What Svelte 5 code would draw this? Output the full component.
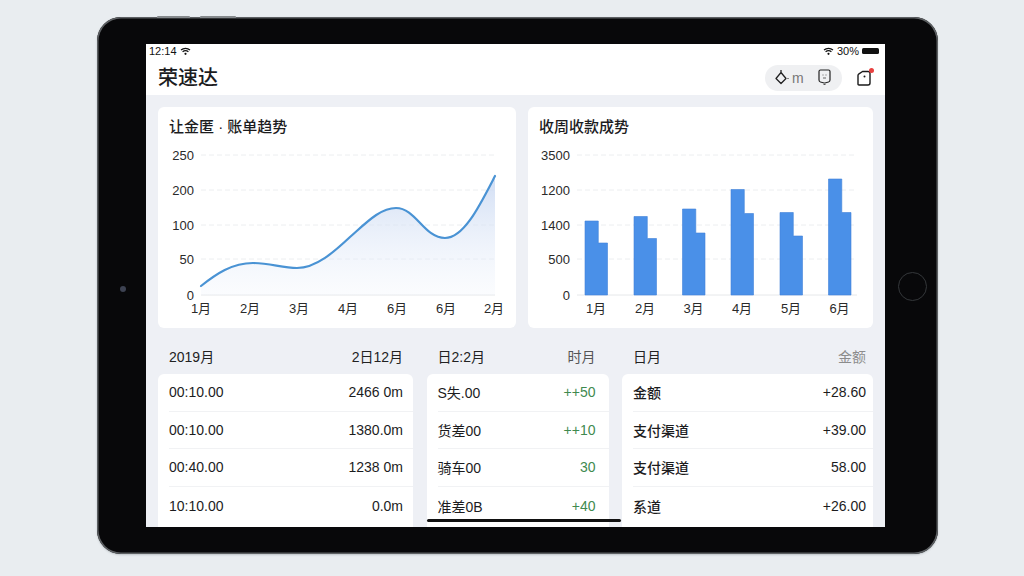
<script>
	const line_y = [
		{ label: '250', y: 48 },
		{ label: '200', y: 83 },
		{ label: '100', y: 118 },
		{ label: '50', y: 152 },
		{ label: '0', y: 188 }
	];
	const line_x = [
		{ label: '1月', x: 43 },
		{ label: '2月', x: 92 },
		{ label: '3月', x: 141 },
		{ label: '4月', x: 190 },
		{ label: '6月', x: 239 },
		{ label: '6月', x: 288 },
		{ label: '2月', x: 336 }
	];
	const curve =
		'M43 179 C58 167 74 156 95 156 C112 156 124 161 139 161 C158 161 176 145 192 130 C208 116 222 101 238 101 C258 101 266 131 287 131 C306 131 322 98 337 69';

	const bar_y = [
		{ label: '3500', y: 48 },
		{ label: '1200', y: 83 },
		{ label: '1400', y: 118 },
		{ label: '500', y: 152 },
		{ label: '0', y: 188 }
	];
	const bars = [
		{ label: '1月', x: 57, tall: 114, short: 136 },
		{ label: '2月', x: 106, tall: 109.5, short: 131.5 },
		{ label: '3月', x: 154.5, tall: 102, short: 126 },
		{ label: '4月', x: 203, tall: 82.5, short: 106.5 },
		{ label: '5月', x: 252, tall: 105.5, short: 129 },
		{ label: '6月', x: 300.5, tall: 72, short: 105.5 }
	];

	const lists = [
		{
			kind: 'plain',
			head: ['2019月', '2日12月'],
			rows: [
				['00:10.00', '2466 0m'],
				['00:10.00', '1380.0m'],
				['00:40.00', '1238 0m'],
				['10:10.00', '0.0m']
			]
		},
		{
			kind: 'delta',
			head: ['日2:2月', '时月'],
			rows: [
				['S失.00', '++50'],
				['货差00', '++10'],
				['骑车00', '30'],
				['准差0B', '+40']
			]
		},
		{
			kind: 'money',
			head: ['日月', '金额'],
			rows: [
				['金额', '+28.60'],
				['支付渠道', '+39.00'],
				['支付渠道', '58.00'],
				['系道', '+26.00']
			]
		}
	];
</script>

<div class="page">
	<div class="device">
		<span class="side-btn one"></span>
		<span class="side-btn two"></span>
		<span class="camera"></span>
		<span class="home-btn"></span>

		<div class="screen">
			<header class="top">
				<div class="status">
					<div class="status-side">
						<span>12:14</span>
						<svg width="11" height="8" viewBox="0 0 11 8">
							<path d="M1 3 C3.5 .7 7.5 .7 10 3 M2.6 4.8 C4.3 3.3 6.7 3.3 8.4 4.8" fill="none" stroke="#111" stroke-width="1.2" />
							<circle cx="5.5" cy="6.8" r="1.1" fill="#111" />
						</svg>
					</div>
					<div class="status-side">
						<svg width="11" height="8" viewBox="0 0 11 8">
							<path d="M1 3 C3.5 .7 7.5 .7 10 3 M2.6 4.8 C4.3 3.3 6.7 3.3 8.4 4.8" fill="none" stroke="#111" stroke-width="1.2" />
							<circle cx="5.5" cy="6.8" r="1.1" fill="#111" />
						</svg>
						<span>30%</span>
						<span class="battery"></span>
					</div>
				</div>
				<div class="nav">
					<h1>荣速达</h1>
					<div class="nav-tools">
						<div class="pill">
							<svg width="16" height="18" viewBox="0 0 16 18">
								<path d="M6 1 V3.5 M6 3.5 L11 9.5 L6 14.5 L1 9.5 Z" fill="none" stroke="#222" stroke-width="1.3" stroke-linejoin="round" />
								<path d="M11 9.5 H14" stroke="#888" stroke-width="1" />
							</svg>
							<span class="pill-text">m</span>
							<svg class="tag" width="13" height="17" viewBox="0 0 13 17">
								<path d="M2.5 1 H10.5 Q12 1 12 2.5 V11 Q12 12.5 10.5 13 L7 14 H6 L2.5 13 Q1 12.5 1 11 V2.5 Q1 1 2.5 1 Z" fill="none" stroke="#222" stroke-width="1.2" />
								<path d="M4.5 6 H5.5 M7.5 6 H8.5 M5 9 H8" stroke="#666" stroke-width="1" />
								<path d="M5.5 15.5 H7.5" stroke="#555" stroke-width="1" />
							</svg>
						</div>
						<div class="bell">
							<svg width="15" height="16" viewBox="0 0 15 16">
								<path d="M1 14 V5.5 Q1 4.5 2 3.8 L5.5 1.5 H11 Q13 1.5 13 3.5 V13 Q13 15 11 15 H2 Q1 15 1 14 Z" fill="none" stroke="#1a1a1a" stroke-width="1.4" stroke-linejoin="round" />
								<circle cx="7.5" cy="6.5" r="1" fill="#1a1a1a" />
							</svg>
							<span class="dot"></span>
						</div>
					</div>
				</div>
			</header>

			<main class="content">
				<section class="charts">
					<div class="card chart-card">
						<h2>让金匿 · 账单趋势</h2>
						<svg class="chart" viewBox="0 0 358 184" width="358" height="184">
							<defs>
								<linearGradient id="area" x1="0" y1="0" x2="0" y2="1">
									<stop offset="0" stop-color="#c9d8f2" stop-opacity="0.85" />
									<stop offset="1" stop-color="#eef3fb" stop-opacity="0.25" />
								</linearGradient>
							</defs>
							<g transform="translate(0,-37)">
								{#each line_y as t, i}
									<text class="tick" x="36" y={t.y + 5} text-anchor="end">{t.label}</text>
									<line
										class={i === 4 ? 'base' : 'grid'}
										x1="43"
										x2="337"
										y1={t.y}
										y2={t.y}
									/>
								{/each}
								<path d="{curve} V188 H43 Z" fill="url(#area)" />
								<path d={curve} fill="none" stroke="#4a93d4" stroke-width="2.2" stroke-linecap="round" />
								{#each line_x as t}
									<text class="tick" x={t.x} y="206" text-anchor="middle">{t.label}</text>
								{/each}
							</g>
						</svg>
					</div>

					<div class="card chart-card">
						<h2>收周收款成势</h2>
						<svg class="chart" viewBox="0 0 345 184" width="345" height="184">
							<g transform="translate(0,-37)">
								{#each bar_y as t, i}
									<text class="tick" x="42" y={t.y + 5} text-anchor="end">{t.label}</text>
									<line
										class={i === 4 ? 'base' : 'grid'}
										x1="49"
										x2="329"
										y1={t.y}
										y2={t.y}
									/>
								{/each}
								{#each bars as b}
									<path
										d="M{b.x} 188 V{b.tall} H{b.x + 13.3} V{b.short} H{b.x + 22.5} V188 Z"
										fill="#4a90e8"
										stroke="#3f82d8"
										stroke-width="0.6"
									/>
									<text class="tick" x={b.x + 11} y="206" text-anchor="middle">{b.label}</text>
								{/each}
							</g>
						</svg>
					</div>
				</section>

				<section class="lists">
					{#each lists as list}
						<div class="list {list.kind}">
							<div class="list-head">
								<span>{list.head[0]}</span>
								<span class="head-end">{list.head[1]}</span>
							</div>
							<div class="card rows">
								{#each list.rows as row}
									<div class="row">
										<span class="row-name">{row[0]}</span>
										<span class="row-value">{row[1]}</span>
									</div>
								{/each}
							</div>
						</div>
					{/each}
				</section>
			</main>

			<span class="home-bar"></span>
		</div>
	</div>
</div>

<style>
	:global(body) {
		margin: 0;
		background: #e9edf0;
	}
	.page {
		width: 1024px;
		height: 576px;
		padding: 17px 86px 22px 97px;
		box-sizing: border-box;
		overflow: hidden;
		font-family: 'Liberation Sans', 'Noto Sans CJK SC', sans-serif;
		color: #1c1c1e;
	}
	.device {
		position: relative;
		width: 841px;
		height: 537px;
		padding: 27px 53px 27px 49px;
		box-sizing: border-box;
		background: #08080a;
		border-radius: 24px;
		box-shadow:
			inset 0 0 0 1.5px #5d6063,
			0 1px 2px rgba(60, 70, 80, 0.25);
	}
	.side-btn {
		position: absolute;
		top: -1px;
		height: 2px;
		background: #85898c;
		border-radius: 1px 1px 0 0;
	}
	.side-btn.one {
		left: 60px;
		width: 33px;
	}
	.side-btn.two {
		left: 103px;
		width: 36px;
	}
	.camera {
		position: absolute;
		left: 23px;
		top: 269px;
		width: 6px;
		height: 6px;
		border-radius: 50%;
		background: #3d4252;
	}
	.home-btn {
		position: absolute;
		left: 801px;
		top: 255px;
		width: 27px;
		height: 27px;
		border: 1.5px solid #34373a;
		border-radius: 50%;
	}
	.screen {
		position: relative;
		width: 739px;
		height: 483px;
		overflow: hidden;
		background: #eef0f5;
	}
	.top {
		height: 51px;
		background: #fff;
		box-sizing: border-box;
	}
	.status {
		display: flex;
		justify-content: space-between;
		align-items: center;
		height: 13px;
		padding: 0 6px 0 3px;
		font-size: 11px;
		color: #111;
	}
	.status-side {
		display: flex;
		align-items: center;
		gap: 3px;
	}
	.battery {
		width: 17px;
		height: 6px;
		background: #111;
		border-radius: 1.5px;
	}
	.nav {
		display: flex;
		justify-content: space-between;
		align-items: center;
		height: 38px;
		padding: 3px 13px 0 12px;
		box-sizing: border-box;
	}
	h1 {
		margin: 0;
		font-size: 20px;
		font-weight: 500;
		line-height: 26px;
	}
	.nav-tools {
		display: flex;
		align-items: center;
		gap: 15px;
	}
	.pill {
		display: flex;
		align-items: center;
		width: 77px;
		height: 26px;
		padding-left: 10px;
		box-sizing: border-box;
		background: #eff0f2;
		border-radius: 13px;
	}
	.pill-text {
		margin-left: 1px;
		font-size: 14px;
		color: #777;
	}
	.tag {
		margin-left: 14px;
	}
	.bell {
		position: relative;
		display: flex;
	}
	.dot {
		position: absolute;
		top: -2px;
		right: -2px;
		width: 5px;
		height: 5px;
		background: #e8403f;
		border-radius: 50%;
	}
	.content {
		padding: 12px 12px 0;
	}
	.card {
		background: #fff;
		border-radius: 6px;
	}
	.charts {
		display: grid;
		grid-template-columns: 358px 345px;
		gap: 12px;
	}
	.chart-card {
		height: 221px;
		overflow: hidden;
	}
	h2 {
		margin: 0;
		padding: 10px 11px 0;
		height: 37px;
		box-sizing: border-box;
		font-size: 15px;
		font-weight: 500;
		line-height: 20px;
	}
	.chart {
		display: block;
	}
	.tick {
		font-size: 13px;
		fill: #2a2a2a;
	}
	.grid {
		stroke: #eceef0;
		stroke-dasharray: 5 3;
	}
	.base {
		stroke: #e6e8ea;
	}
	.lists {
		display: grid;
		grid-template-columns: 255px 182px 251px;
		gap: 14px 13.5px;
		margin-top: 18px;
		--end: 10px;
	}
	.list.delta {
		--end: 13px;
	}
	.list.money {
		--end: 7px;
	}
	.list-head {
		display: flex;
		justify-content: space-between;
		height: 28px;
		padding: 0 var(--end) 0 11px;
		font-size: 14px;
		line-height: 22px;
		color: #222;
	}
	.delta .head-end {
		color: #555;
	}
	.money .head-end {
		color: #8c8c8c;
	}
	.rows {
		padding-bottom: 10px;
	}
	.row {
		display: flex;
		justify-content: space-between;
		align-items: center;
		height: 37.6px;
		margin-left: 11px;
		padding-right: var(--end);
		box-sizing: border-box;
		border-bottom: 1px solid #f1f2f4;
		font-size: 14px;
	}
	.row:last-child {
		border-bottom: 0;
	}
	.money .row-name {
		font-weight: 500;
	}
	.delta .row-value {
		color: #3f8a4f;
	}
	.home-bar {
		position: absolute;
		left: 281px;
		bottom: 5px;
		width: 194px;
		height: 3px;
		background: #111;
		border-radius: 2px;
	}
</style>
